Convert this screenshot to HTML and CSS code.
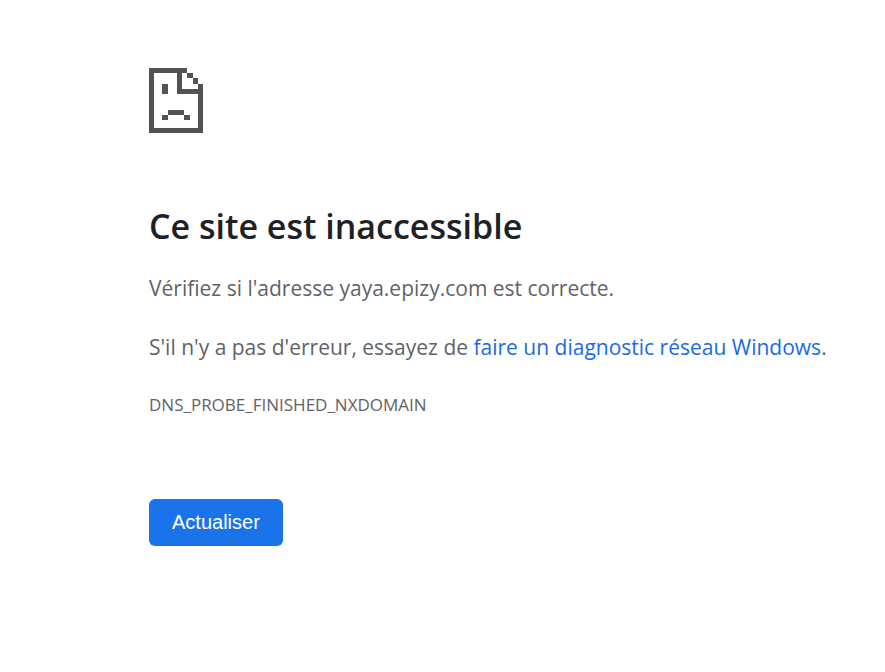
FILE: index.html
```html
<!DOCTYPE html>
<html lang="fr">
<head>
<meta charset="utf-8">
<meta name="viewport" content="width=device-width, initial-scale=1">
<title>yaya.epizy.com</title>
<link rel="stylesheet" href="styles.css">
</head>
<body>
<main class="error">
  <svg class="error-icon" viewBox="0 0 162 195" shape-rendering="crispEdges" aria-hidden="true">
    <path fill="#535353" d="M0 0H114V16H99V63H147V47H162V195H0ZM15 16V180H147V79H84V16ZM115 16H131V31H115ZM131 31H147V47H131ZM40 47H57V79H40ZM57 126H105V142H57ZM40 142H57V157H40ZM105 142H122V157H105Z" fill-rule="evenodd"/>
  </svg>
  <h1 class="title">Ce site est inaccessible</h1>
  <p class="text">Vérifiez si l'adresse yaya.epizy.com est correcte.</p>
  <p class="text">S'il n'y a pas d'erreur, essayez de <a class="link" href="#">faire un diagnostic réseau Windows</a>.</p>
  <p class="code">DNS_PROBE_FINISHED_NXDOMAIN</p>
  <button class="reload" type="button">Actualiser</button>
</main>
</body>
</html>
```
FILE: styles.css
```css
body {
  margin: 0;
  background: #fff;
  color: #5f6368;
  font-family: "Segoe UI", "Open Sans", "Noto Sans", sans-serif;
}

.error {
  padding: 68px 32px 32px 149px;
}

.error-icon {
  display: block;
  width: 54px;
  height: 65px;
}

.title {
  margin: 67px 0 19px;
  color: #202124;
  font-size: 34px;
  font-weight: 600;
  line-height: 52px;
}

.text {
  margin: 0 0 24px;
  font-size: 21px;
  line-height: 35px;
}

.link {
  color: #1a6ae8;
  text-decoration: none;
}

.code {
  margin: 0;
  font-size: 17px;
  line-height: 32px;
}

.reload {
  display: block;
  margin-top: 78px;
  padding: 12px 23px;
  border: 0;
  border-radius: 6px;
  background: #1a73e8;
  color: #fff;
  font-family: "Liberation Sans", Arial, sans-serif;
  font-size: 20px;
  line-height: 23px;
}
```
